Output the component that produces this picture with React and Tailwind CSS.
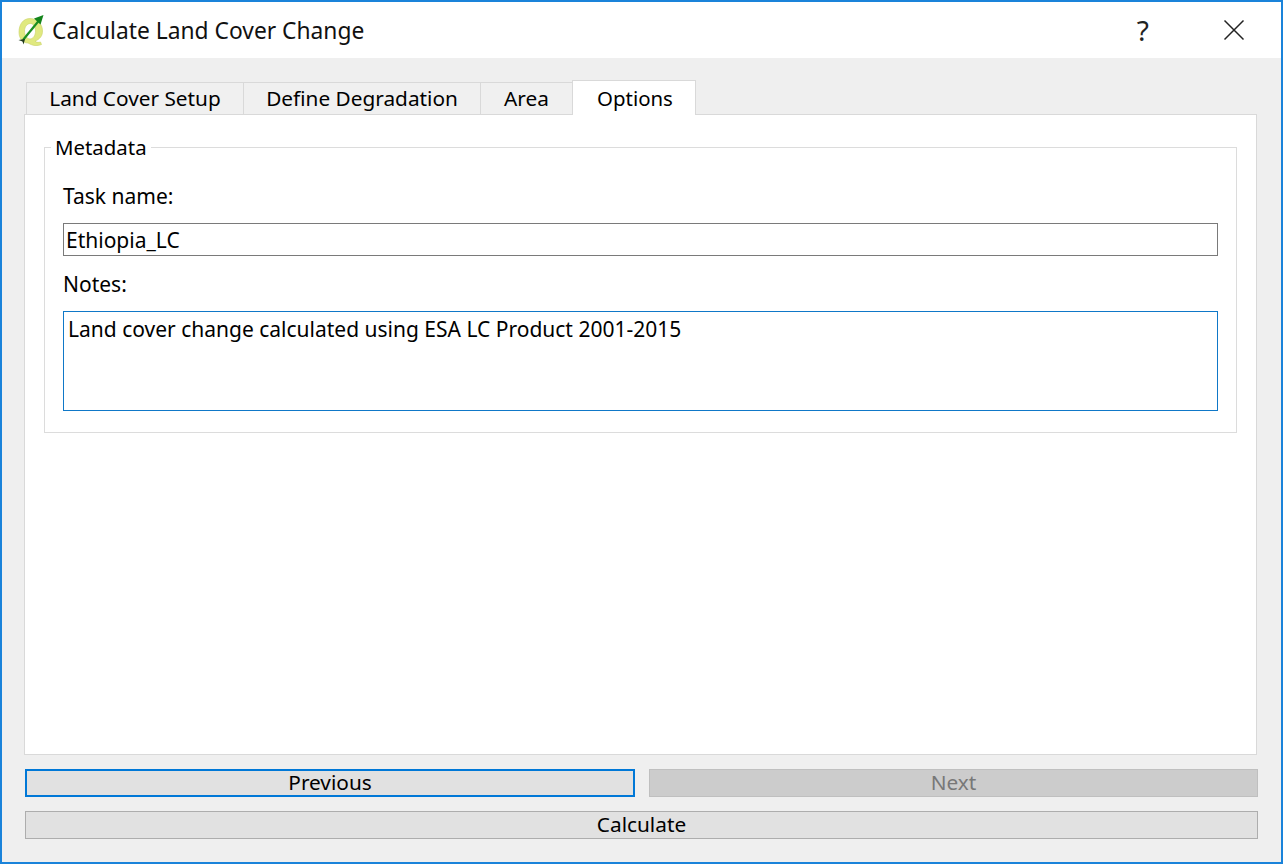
import React from 'react';

const tabs = [
  { label: 'Land Cover Setup', width: 'w-[217px]' },
  { label: 'Define Degradation', width: 'w-[237px]' },
  { label: 'Area', width: 'w-[92px]' },
];

const QgisLogo = () => (
  <svg width="30" height="32" viewBox="0 0 30 32">
    <path fillRule="evenodd" d="M14 4.500C7 4.500 3 10.500 3 18c0 6.500 3.500 11 9 11l3 1.500c3 1.500 7 1.500 10.500 0l-1-2.500c-2 .7-4 .4-5.500-.8C24 25 26.500 22 26.500 17 26.500 10 21 4.500 14 4.500zm.5 5c2.500 0 5 3 5 7.500s-2.500 8-5.500 8-5.500-3.500-5.500-8 3-7.500 6-7.500z" fill="#e0e97f" stroke="#c9d266" strokeWidth="0.600" />
    <path d="M7 26 L23 6.500" stroke="#1c8f22" strokeWidth="2.200" />
    <path d="M27.500 1 L18 4.500 L24.500 10.500 Z" fill="#14851c" />
    <path d="M2.500 26 L9 25 L7.500 30.500 L6.500 27.500 Z" fill="#1f3a1f" />
  </svg>
);

export default function App() {
  return (
    <div className="w-[1283px] h-[864px] flex flex-col border-2 border-[#1a83da] bg-[#efefef] text-black font-['Noto_Sans','Open_Sans',sans-serif] text-[20.8px] leading-none overflow-hidden">
      <div className="h-[56px] shrink-0 bg-white flex items-center pl-[14px]">
        <QgisLogo />
        <span className="ml-[6px] pt-[2px] text-[22.800px] text-[#111]">Calculate Land Cover Change</span>
        <span className="ml-auto mr-[74px] text-[28px] text-[#222]">?</span>
        <svg className="mr-[36px]" width="22" height="22" viewBox="0 0 22 22">
          <path d="M1.500 1.500 L20.500 20.500 M20.500 1.500 L1.500 20.500" stroke="#222" strokeWidth="1.500" />
        </svg>
      </div>

      <div className="flex-1 flex flex-col pl-[22px] pr-[23px] pt-[22px]">
        <div className="flex items-end h-[35px] pl-[2px] relative z-10 -mb-px">
          {tabs.map((t) => (
            <div key={t.label} className={`${t.width} h-[33px] flex items-center justify-center border border-r-0 border-[#d9d9d9] bg-[#f0f0f0]`}>{t.label}</div>
          ))}
          <div className="w-[124px] h-[35px] flex items-center justify-center pl-[2px] text-[20.400px] border border-b-0 border-[#d9d9d9] bg-white">Options</div>
        </div>

        <div className="h-[641px] mr-px shrink-0 bg-white border border-[#d9d9d9] pt-[32px] px-[19px]">
          <div className="relative h-[286px] border border-[#dcdcdc] px-[18px] text-[21px]">
            <span className="absolute left-[6px] -top-[11px] bg-white px-[4px] text-[20.400px]">Metadata</span>
            <div className="pt-[38px] h-[75px]">Task name:</div>
            <div className="h-[33px] border border-[#7a7a7a] flex items-center pl-[2px] pt-[2px]">Ethiopia_LC</div>
            <div className="h-[55px] pt-[18px]">Notes:</div>
            <div className="h-[100px] border border-[#0f78c8] pl-[4px] pt-[7px]">Land cover change calculated using ESA LC Product 2001-2015</div>
          </div>
        </div>

        <div className="flex gap-[14px] mt-[14px] pl-px">
          <button className="w-[610px] h-[28px] pb-px bg-[#e1e1e1] border-2 border-[#0078d7]">Previous</button>
          <button className="flex-1 h-[28px] pb-px bg-[#cccccc] border border-[#bfbfbf] text-[#787878]">Next</button>
        </div>
        <button className="h-[28px] mt-[14px] ml-px pb-px bg-[#e1e1e1] border border-[#adadad]">Calculate</button>
      </div>
    </div>
  );
}
